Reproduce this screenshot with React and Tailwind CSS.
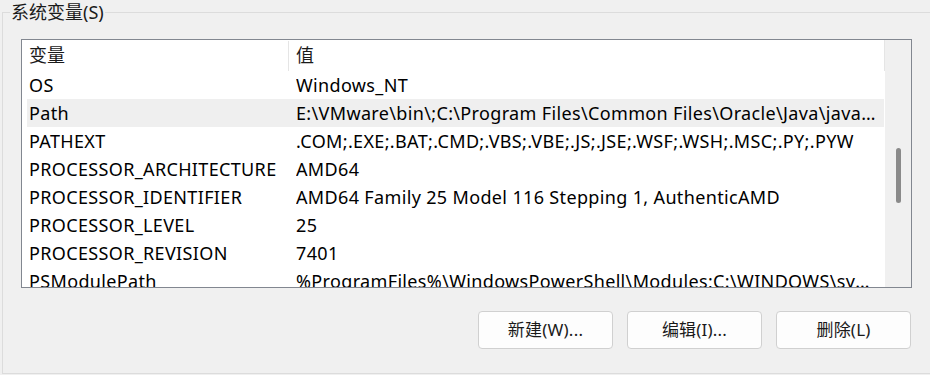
import React from "react";

const rows = [
  { name: "OS", value: "Windows_NT" },
  {
    name: "Path",
    value:
      "E:\\VMware\\bin\\;C:\\Program Files\\Common Files\\Oracle\\Java\\javapath;C:\\WINDOWS\\system32",
    selected: true,
  },
  { name: "PATHEXT", value: ".COM;.EXE;.BAT;.CMD;.VBS;.VBE;.JS;.JSE;.WSF;.WSH;.MSC;.PY;.PYW" },
  { name: "PROCESSOR_ARCHITECTURE", value: "AMD64" },
  { name: "PROCESSOR_IDENTIFIER", value: "AMD64 Family 25 Model 116 Stepping 1, AuthenticAMD" },
  { name: "PROCESSOR_LEVEL", value: "25" },
  { name: "PROCESSOR_REVISION", value: "7401" },
  {
    name: "PSModulePath",
    value: "%ProgramFiles%\\WindowsPowerShell\\Modules;C:\\WINDOWS\\system32\\WindowsPowerShell",
  },
];

const font = "font-['Noto_Sans','Noto_Sans_CJK_SC',sans-serif]";

const Button = ({ children }) => (
  <button className="w-[135px] h-[38px] rounded-[4px] border border-[#d0d0d0] bg-[#fdfdfd] text-[17px] tracking-[0.2px] text-[#1a1a1a] flex items-center justify-center">
    {children}
  </button>
);

export default function App() {
  return (
    <div className={`w-[930px] h-[375px] bg-[#f0f0f0] overflow-hidden pt-[12px] pl-[2px] ${font}`}>
      {/* group box */}
      <div className="relative w-[960px] h-[362px] border-t border-l border-b border-[#dcdcdc] pl-[18px] pt-[26px]">
        <span className="absolute left-[7px] top-[-13px] bg-[#f0f0f0] px-[1px] text-[18px] leading-[24px] text-[#1a1a1a]">
          系统变量(S)
        </span>

        {/* list view */}
        <div className="w-[891px] h-[249px] border border-[#828790] bg-white flex overflow-hidden">
          <div className="w-[862px] flex flex-col">
            <div className="h-[31px] flex items-center shrink-0 text-[18px] text-[#1a1a1a]">
              <div className="w-[266px] pl-[7px]">变量</div>
              <div className="w-px h-[30px] bg-[#e5e5e5]" />
              <div className="pl-[7px]">值</div>
            </div>
            {rows.map((r) => (
              <div
                key={r.name}
                className={`h-[28px] shrink-0 ml-[5px] flex items-center text-[18px] tracking-[0.35px] text-black ${
                  r.selected ? "bg-[#efefef]" : ""
                }`}
              >
                <div className="w-[269px] pl-[2px] whitespace-nowrap">{r.name}</div>
                <div className="flex-1 min-w-0 truncate pr-[8px]">{r.value}</div>
              </div>
            ))}
          </div>
          <div className="w-px h-[31px] bg-[#e5e5e5]" />
          <div className="flex-1 bg-[#f0f0f0] flex justify-center">
            <div className="mt-[108px] w-[5px] h-[55px] rounded-full bg-[#8a8a8a]" />
          </div>
        </div>

        {/* buttons */}
        <div className="w-[891px] mt-[23px] flex justify-end gap-[14px] pr-[1px]">
          <Button>新建(W)...</Button>
          <Button>编辑(I)...</Button>
          <Button>删除(L)</Button>
        </div>
      </div>
    </div>
  );
}
